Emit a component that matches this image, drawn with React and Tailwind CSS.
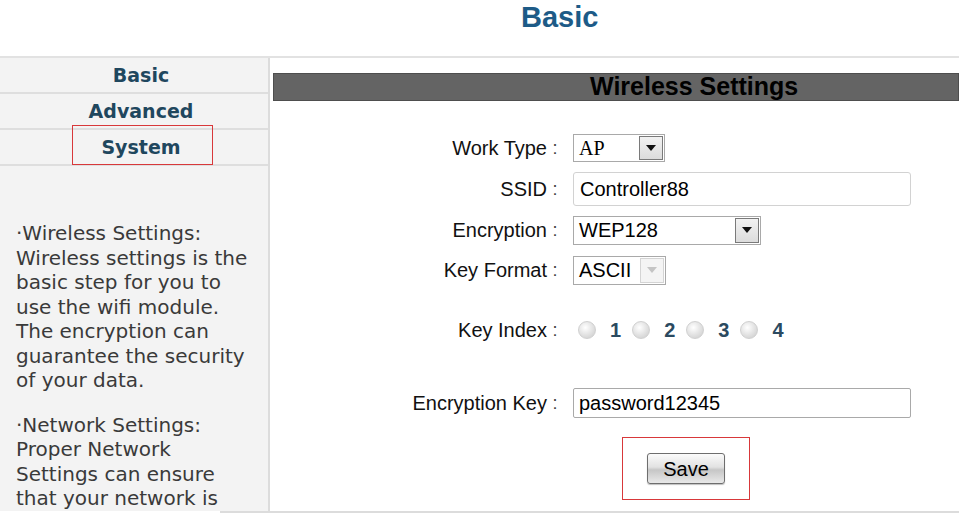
import React from "react";

const navItems = ["Basic", "Advanced", "System"];

function Arrow({ disabled }) {
    return (
        <div
            className={
                disabled
                    ? "flex h-full w-[24px] items-center justify-center border border-[#d4d4d4] bg-[#f4f4f4]"
                    : "flex h-full w-[24px] items-center justify-center border border-[#7a7a7a] bg-[linear-gradient(#f2f2f2,#dcdcdc)]"
            }
        >
            <svg width="10" height="6" viewBox="0 0 10 6">
                <path d="M0 0h10L5 6z" fill={disabled ? "#c4c4c4" : "#111"} />
            </svg>
        </div>
    );
}

function Select({ value, width, height, serif, disabled }) {
    return (
        <div
            className={`flex items-stretch border border-[#a9a9a9] bg-white p-px ${width} ${height}`}
        >
            <div
                className={`flex flex-1 items-center pl-[4px] text-[20px] text-black ${
                    serif ? "font-['Liberation_Serif',serif]" : ""
                }`}
            >
                {value}
            </div>
            <Arrow disabled={disabled} />
        </div>
    );
}

function Row({ label, className = "", children }) {
    return (
        <div className={`flex items-center ${className}`}>
            <div className="w-[274px] text-right text-[20px] text-[#111]">{label}</div>
            <div className="w-[16px] text-center text-[18px] text-[#444]">:</div>
            <div className="ml-[10px] flex items-center">{children}</div>
        </div>
    );
}

function Radio({ n }) {
    return (
        <div className="mr-[11px] flex items-center">
            <span className="block h-[18px] w-[18px] rounded-full border border-[#d0d0d0] bg-[radial-gradient(circle_at_40%_35%,#ffffff,#e6e6e6_45%,#c9c9c9)]" />
            <span className="ml-[14px] text-[20px] font-bold text-[#2b4a60]">{n}</span>
        </div>
    );
}

export default function App() {
    return (
        <div className="h-[513px] w-[959px] overflow-hidden bg-white font-['Liberation_Sans',Arial,sans-serif]">
            <header className="h-[56px] pl-[521px]">
                <h1 className="text-[29px] leading-[34px] font-bold text-[#1d5b87]">Basic</h1>
            </header>

            <div className="flex h-[455px] border-t-2 border-[#e2e2e2]">
                <aside className="w-[270px] shrink-0 border-r-2 border-[#dcdcdc] bg-[#f3f3f3] font-['DejaVu_Sans',Verdana,sans-serif]">
                    <nav>
                        {navItems.map((item) => (
                            <div
                                key={item}
                                className="relative flex h-[36px] items-center justify-center border-b-2 border-[#dedede] pl-[14px] text-[19px] font-bold text-[#1f475e]"
                            >
                                {item}
                                {item === "System" && (
                                    <span className="absolute top-[-5px] bottom-[-1px] left-[72px] w-[141px] border border-[#d8383a]" />
                                )}
                            </div>
                        ))}
                    </nav>

                    <div className="mt-[55px] pl-[16px] text-[20px] leading-[24.5px] whitespace-nowrap text-[#3a3a3a]">
                        <p>
                            ·Wireless Settings:
                            <br />
                            Wireless settings is the
                            <br />
                            basic step for you to
                            <br />
                            use the wifi module.
                            <br />
                            The encryption can
                            <br />
                            guarantee the security
                            <br />
                            of your data.
                        </p>
                        <p className="mt-[20px]">
                            ·Network Settings:
                            <br />
                            Proper Network
                            <br />
                            Settings can ensure
                            <br />
                            that your network is
                        </p>
                    </div>
                </aside>

                <main className="flex-1 pt-[15px] pl-[3px]">
                    <div className="flex h-[28px] items-center border border-[#4e4e4e] bg-[#646464] pl-[316px] text-[25px] font-bold text-black">
                        Wireless Settings
                    </div>

                    <Row label="Work Type" className="mt-[32px]">
                        <Select value="AP" width="w-[92px]" height="h-[28px]" serif />
                    </Row>

                    <Row label="SSID" className="mt-[9px]">
                        <div className="flex h-[34px] w-[338px] items-center rounded-[3px] border border-[#d2d2d2] pl-[6px] text-[20px] text-black">
                            Controller88
                        </div>
                    </Row>

                    <Row label="Encryption" className="mt-[9px]">
                        <Select value="WEP128" width="w-[188px]" height="h-[29px]" />
                    </Row>

                    <Row label="Key Format" className="mt-[10px]">
                        <Select value="ASCII" width="w-[93px]" height="h-[29px]" disabled />
                    </Row>

                    <Row label="Key Index" className="mt-[31px] h-[28px]">
                        <div className="flex items-center pl-[5px]">
                            {[1, 2, 3, 4].map((n) => (
                                <Radio key={n} n={n} />
                            ))}
                        </div>
                    </Row>

                    <Row label="Encryption Key" className="mt-[44px]">
                        <div className="flex h-[30px] w-[338px] items-center rounded-[2px] border border-[#a9a9a9] pl-[5px] text-[20px] text-black">
                            password12345
                        </div>
                    </Row>

                    <div className="mt-[19px] ml-[349px] flex h-[63px] w-[128px] justify-center border border-[#d8383a] pt-[15px]">
                        <button className="h-[31px] w-[78px] rounded-[3px] border border-[#6e6e6e] bg-[linear-gradient(#fbfbfb,#e2e2e2_45%,#c6c6c6_55%,#e9e9e9)] text-[20px] text-black shadow-[0_1px_1px_rgba(0,0,0,0.25)]">
                            Save
                        </button>
                    </div>
                </main>
            </div>

            <div className="ml-[220px] h-[2px] bg-[#dcdcdc]" />
        </div>
    );
}
